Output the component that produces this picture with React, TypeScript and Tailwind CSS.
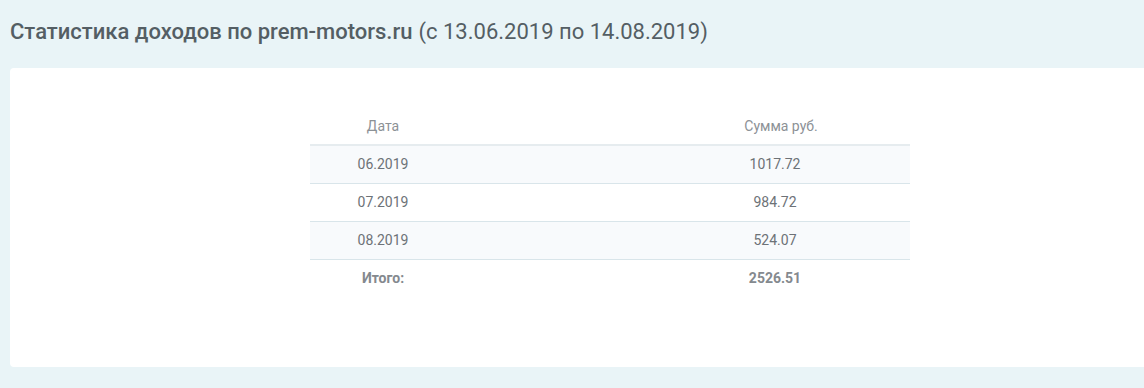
import React from 'react';

const rows = [
  { date: '06.2019', sum: '1017.72' },
  { date: '07.2019', sum: '984.72' },
  { date: '08.2019', sum: '524.07' },
];

export default function App() {
  return (
    <div
      className="w-[1144px] h-[388px] bg-[#e9f4f7] pl-[10px] overflow-hidden"
      style={{ fontFamily: 'Roboto, "Noto Sans", sans-serif' }}
    >
      {/* Page heading */}
      <h1 className="h-[68px] flex items-center pb-[6px] text-[22px] text-[#545e64]">
        <span className="font-medium">Статистика доходов по prem-motors.ru</span>
        <span className="ml-[6px] font-normal">(с 13.06.2019 по 14.08.2019)</span>
      </h1>

      {/* Card */}
      <div className="h-[299px] bg-white rounded-l-[4px] pt-[40px] pl-[300px]">
        <div className="w-[600px] text-[14px] text-[#6d7277]">
          <div className="grid grid-cols-[146px_184px_270px] h-[38px] items-center text-[#8c9196] border-b-2 border-[#e6ecef]">
            <div className="text-center">Дата</div>
            <div />
            <div className="text-center pl-[12px]">Сумма руб.</div>
          </div>
          {rows.map((r, i) => (
            <div
              key={r.date}
              className={`grid grid-cols-[146px_184px_270px] h-[38px] items-center border-b border-[#d9e5ea] ${
                i % 2 === 0 ? 'bg-[#f8fafc]' : 'bg-white'
              }`}
            >
              <div className="text-center">{r.date}</div>
              <div />
              <div className="text-center">{r.sum}</div>
            </div>
          ))}
          <div className="grid grid-cols-[146px_184px_270px] h-[37px] items-center font-bold text-[#84898e]">
            <div className="text-center">Итого:</div>
            <div />
            <div className="text-center">2526.51</div>
          </div>
        </div>
      </div>
    </div>
  );
}
